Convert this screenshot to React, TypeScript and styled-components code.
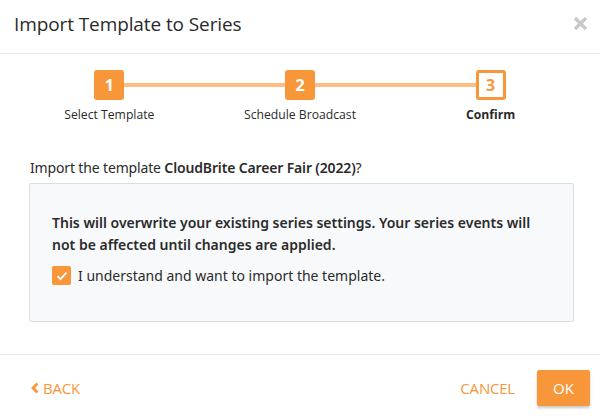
import React, { useState } from "react";
import styled, { createGlobalStyle } from "styled-components";

const ORANGE = "#f7973a";

const Global = createGlobalStyle`
  html, body { margin: 0; padding: 0; background: #fff; }
  body { font-family: "Open Sans", "Noto Sans", sans-serif; color: #2b2b2b; }
  * { box-sizing: border-box; }
`;

const Dialog = styled.div`
  width: 600px;
  height: 420px;
  display: flex;
  flex-direction: column;
  background: #fff;
`;

const Header = styled.div`
  height: 54px;
  display: flex;
  align-items: center;
  justify-content: space-between;
  padding: 0 12px 6px 14px;
  border-bottom: 1px solid #e6e6e6;
`;

const Title = styled.h1`
  margin: 0;
  font-family: "Open Sans", sans-serif;
  font-weight: 400;
  font-size: 19px;
  color: #2a2a2a;
  letter-spacing: -0.1px;
`;

const Close = styled.button`
  border: 0;
  background: none;
  padding: 0;
  width: 16px;
  height: 16px;
  display: flex;
  align-items: center;
  justify-content: center;
  cursor: pointer;
`;

const Stepper = styled.div`
  display: grid;
  grid-template-columns: repeat(3, 1fr);
  padding: 16px 14px 0 14px;
`;

const Step = styled.div<{ $first?: boolean; $last?: boolean }>`
  position: relative;
  display: flex;
  flex-direction: column;
  align-items: center;
  &::before, &::after {
    content: "";
    position: absolute;
    top: 13px;
    height: 4px;
    background: #ffbd84;
  }
  &::before {
    left: 0;
    right: 50%;
    display: ${(p) => (p.$first ? "none" : "block")};
  }
  &::after {
    left: 50%;
    right: 0;
    display: ${(p) => (p.$last ? "none" : "block")};
  }
`;

const StepBox = styled.div<{ $active?: boolean }>`
  position: relative;
  z-index: 1;
  width: 30px;
  height: 30px;
  border-radius: 3px;
  display: flex;
  align-items: center;
  justify-content: center;
  font-family: "Open Sans", sans-serif;
  font-weight: 700;
  font-size: 16px;
  background: ${(p) => (p.$active ? "#fff" : ORANGE)};
  color: ${(p) => (p.$active ? ORANGE : "#fff")};
  border: ${(p) => (p.$active ? `3px solid ${ORANGE}` : "none")};
`;

const StepLabel = styled.div<{ $active?: boolean }>`
  margin-top: 6px;
  font-family: "Open Sans", sans-serif;
  font-size: 12.2px;
  font-weight: ${(p) => (p.$active ? 700 : 400)};
  color: #2b2b2b;
`;

const Body = styled.div`
  flex: 1;
  padding: 35px 26px 0 29px;
  font-family: "Noto Sans", sans-serif;
  font-size: 14px;
`;

const Question = styled.p`
  margin: 0 0 0 1px;
  line-height: 20px;
  letter-spacing: -0.15px;
  color: #2b2b2b;
  b { font-weight: 600; }
`;

const Panel = styled.div`
  margin-top: 5px;
  height: 139px;
  background: #f8f9fb;
  border: 1px solid #dcdde0;
  border-radius: 2px;
  padding: 28px 22px 0 22px;
`;

const Warning = styled.p`
  margin: 0;
  font-weight: 600;
  line-height: 22px;
  color: #2b2b2b;
`;

const CheckRow = styled.label`
  margin-top: 10px;
  display: flex;
  align-items: center;
  gap: 7px;
  cursor: pointer;
  color: #2b2b2b;
`;

const Box = styled.span<{ $on: boolean }>`
  width: 19px;
  height: 19px;
  border-radius: 2px;
  background: ${(p) => (p.$on ? ORANGE : "#fff")};
  border: ${(p) => (p.$on ? "none" : "1px solid #bbb")};
  display: flex;
  align-items: center;
  justify-content: center;
`;

const Footer = styled.div`
  height: 66px;
  border-top: 1px solid #e6e6e6;
  display: flex;
  align-items: center;
  justify-content: space-between;
  padding: 0 10px 0 30px;
`;

const TextButton = styled.button`
  border: 0;
  background: none;
  padding: 0;
  display: flex;
  align-items: center;
  gap: 3px;
  font-family: "Open Sans", sans-serif;
  font-size: 15px;
  color: ${ORANGE};
  letter-spacing: -0.2px;
  cursor: pointer;
`;

const Actions = styled.div`
  display: flex;
  align-items: center;
  gap: 22px;
`;

const OkButton = styled.button`
  width: 53px;
  height: 36px;
  border: 0;
  border-radius: 2px;
  background: ${ORANGE};
  color: #fff;
  font-family: "Open Sans", sans-serif;
  font-size: 15px;
  box-shadow: 0 2px 3px rgba(0, 0, 0, 0.22);
  cursor: pointer;
`;

const steps = ["Select Template", "Schedule Broadcast", "Confirm"];

export default function App() {
  const [checked, setChecked] = useState(true);
  return (
    <>
      <Global />
      <Dialog>
        <Header>
          <Title>Import Template to Series</Title>
          <Close aria-label="Close">
            <svg width="15" height="15" viewBox="0 0 15 15">
              <path d="M2 2 L13 13 M13 2 L2 13" stroke="#c8c8c8" strokeWidth="3.2" strokeLinecap="butt" />
            </svg>
          </Close>
        </Header>
        <Stepper>
          {steps.map((s, i) => (
            <Step key={s} $first={i === 0} $last={i === steps.length - 1}>
              <StepBox $active={i === 2}>{i + 1}</StepBox>
              <StepLabel $active={i === 2}>{s}</StepLabel>
            </Step>
          ))}
        </Stepper>
        <Body>
          <Question>
            Import the template <b>CloudBrite Career Fair (2022)</b>?
          </Question>
          <Panel>
            <Warning>
              This will overwrite your existing series settings. Your series events will not be affected until changes are applied.
            </Warning>
            <CheckRow onClick={() => setChecked(!checked)}>
              <Box $on={checked}>
                {checked && (
                  <svg width="12" height="10" viewBox="0 0 12 10">
                    <path d="M1.5 5.2 L4.5 8.2 L10.5 1.5" fill="none" stroke="#fff" strokeWidth="1.8" />
                  </svg>
                )}
              </Box>
              I understand and want to import the template.
            </CheckRow>
          </Panel>
        </Body>
        <Footer>
          <TextButton>
            <svg width="10" height="12" viewBox="0 0 10 12">
              <path d="M7.5 1.5 L3 6 L7.5 10.5" fill="none" stroke={ORANGE} strokeWidth="2.8" />
            </svg>
            BACK
          </TextButton>
          <Actions>
            <TextButton>CANCEL</TextButton>
            <OkButton>OK</OkButton>
          </Actions>
        </Footer>
      </Dialog>
    </>
  );
}
